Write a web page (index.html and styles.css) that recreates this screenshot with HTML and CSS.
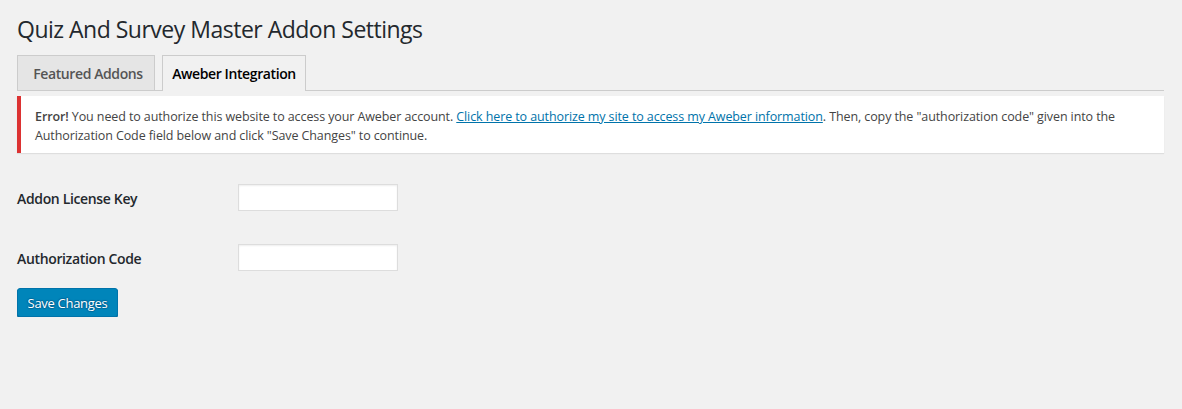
FILE: index.html
```html
<!DOCTYPE html>
<html>
<head>
<meta charset="utf-8">
<link rel="stylesheet" href="styles.css">
</head>
<body>
<div class="wrap">
  <h1 class="title">Quiz And Survey Master Addon Settings</h1>
  <nav class="tabs">
    <a class="tab">Featured Addons</a>
    <a class="tab tab-active">Aweber Integration</a>
  </nav>
  <div class="notice">
    <p><strong>Error!</strong> <span>You need to authorize this website to access your Aweber account.</span> <a class="link" href="#">Click here to authorize my site to access my Aweber information</a><span>. Then, copy the "authorization code" given into the</span> <span>Authorization Code field below and click "Save Changes" to continue.</span></p>
  </div>
  <form class="form">
    <div class="row">
      <label class="label">Addon License Key</label>
      <input class="input" type="text">
    </div>
    <div class="row">
      <label class="label">Authorization Code</label>
      <input class="input" type="text">
    </div>
    <button class="button" type="button">Save Changes</button>
  </form>
</div>
</body>
</html>
```
FILE: styles.css
```css
html, body {
  margin: 0;
  padding: 0;
  background: #f1f1f1;
}
body {
  font-family: "Open Sans", "Noto Sans", sans-serif;
  color: #444;
  font-size: 13px;
}
.wrap {
  padding: 0 18px 0 17px;
}
.title {
  margin: 0;
  padding-top: 15px;
  height: 55px;
  box-sizing: border-box;
  font-size: 23px;
  font-weight: 400;
  line-height: 29px;
  color: #23282d;
  letter-spacing: -0.5px;
}
.tabs {
  display: flex;
  gap: 7px;
  height: 36px;
  box-sizing: border-box;
  border-bottom: 1px solid #ccc;
}
.tab {
  display: block;
  height: 35px;
  box-sizing: border-box;
  padding: 0 0 0 4px;
  border: 1px solid #ccc;
  border-bottom: none;
  background: #e5e5e5;
  color: #555;
  font-size: 14px;
  font-weight: 600;
  line-height: 35px;
  white-space: nowrap;
  letter-spacing: -0.4px;
  width: 138px;
  text-align: center;
}
.tab-active {
  width: 144px;
  padding: 0;
  background: #f1f1f1;
  color: #000;
  height: 36px;
  margin-bottom: -1px;
}
.notice {
  margin-top: 5px;
  background: #fff;
  border-left: 4px solid #dc3232;
  box-shadow: 0 1px 1px rgba(0,0,0,0.08);
  padding: 11px 12px 8px 14px;
}
.notice p {
  margin: 0;
  font-size: 12.5px;
  letter-spacing: -0.1px;
  line-height: 19px;
  color: #444;
}
.notice strong { font-weight: 600; }
.link { color: #0073aa; text-decoration: underline; }
.form { margin-top: 31px; }
.row {
  display: flex;
  align-items: center;
  height: 27px;
  margin-bottom: 33px;
}
.row + .row { margin-bottom: 17px; }
.label {
  width: 221px;
  padding-top: 1px;
  font-size: 14px;
  font-weight: 600;
  letter-spacing: -0.35px;
  color: #23282d;
}
.input {
  width: 160px;
  height: 27px;
  box-sizing: border-box;
  border: 1px solid #ddd;
  background: #fff;
  box-shadow: inset 0 1px 2px rgba(0,0,0,0.07);
  margin: 0;
}
.button {
  display: block;
  width: 101px;
  height: 29px;
  padding: 0;
  background: #0085ba;
  border: 1px solid #0073aa;
  border-radius: 3px;
  box-shadow: 0 1px 0 #006799;
  color: #fff;
  font-family: inherit;
  font-size: 13px;
  letter-spacing: -0.3px;
  text-shadow: 0 -1px 1px #006799, 1px 0 1px #006799, 0 1px 1px #006799, -1px 0 1px #006799;
}
```
